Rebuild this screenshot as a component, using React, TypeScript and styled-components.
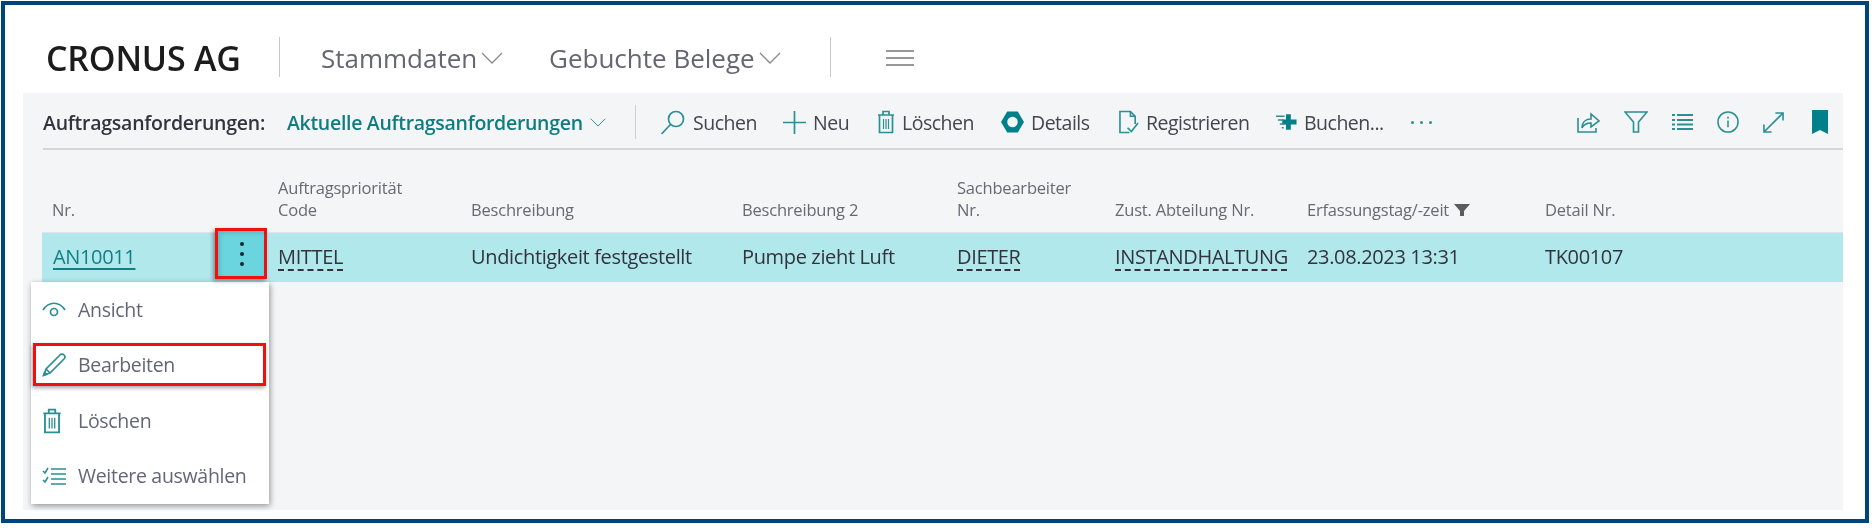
import styled, { createGlobalStyle } from "styled-components"

const GlobalStyle = createGlobalStyle`
  html, body {
    margin: 0;
    padding: 0;
    background: white;
  }
  body {
    font-family: "Open Sans", "Noto Sans", sans-serif;
  }
`

const teal = "#2b8f94"
const tealDark = "#00818a"

const Frame = styled.div`
  box-sizing: border-box;
  margin: 1px;
  width: 1868px;
  height: 522px;
  border: 4px solid #00447c;
  display: flex;
  flex-direction: column;
  overflow: hidden;
`

const AppHeader = styled.header`
  height: 88px;
  padding: 16px 0 0 41px;
  box-sizing: border-box;
  display: flex;
  align-items: center;
  flex-shrink: 0;
  filter: blur(0.4px);
`

const Brand = styled.div`
  width: 233px;
  padding-top: 2px;
  font-size: 34px;
  font-weight: 600;
  letter-spacing: -0.2px;
  color: #1c1c1c;
`

const HeaderDivider = styled.div`
  width: 1px;
  height: 40px;
  background: #c6c6c6;
`

const NavItem = styled.div<{ $width: number }>`
  width: ${(p) => p.$width}px;
  padding-top: 2px;
  display: flex;
  align-items: center;
  gap: 4px;
  font-size: 26px;
  letter-spacing: 0;
  color: #666672;
`

const NavList = styled.nav`
  display: flex;
  padding-left: 41px;
  width: 550px;
  box-sizing: border-box;
`

const MenuButton = styled.div`
  display: flex;
  margin: 2px 0 0 55px;
  color: #777;
`

const Panel = styled.main`
  position: relative;
  flex: 1;
  margin: 0 22px 9px 18px;
  background: #f4f5f7;
  filter: blur(0.4px);
`

const Toolbar = styled.div`
  height: 57px;
  margin-left: 20px;
  padding-top: 3px;
  box-sizing: border-box;
  border-bottom: 2px solid #d5d6d8;
  display: flex;
  align-items: center;
`

const PageLabel = styled.div`
  width: 244px;
  font-size: 19.5px;
  font-weight: 600;
  letter-spacing: -0.25px;
  color: #33333d;
`

const ViewPicker = styled.div`
  width: 348px;
  box-sizing: border-box;
  display: flex;
  align-items: center;
  gap: 7px;
  font-size: 19.5px;
  font-weight: 600;
  letter-spacing: -0.3px;
  color: #0f7d80;
`

const ToolDivider = styled.div`
  width: 1px;
  height: 34px;
  background: #cfd0d2;
  margin-right: 24px;
`

const ToolButton = styled.div<{ $width: number }>`
  width: ${(p) => p.$width}px;
  display: flex;
  align-items: center;
  gap: 7px;
  font-size: 19.5px;
  letter-spacing: -0.5px;
  color: #45454f;
`

const MoreDots = styled.div`
  display: flex;
  gap: 6px;
`

const MoreDot = styled.span`
  width: 3px;
  height: 3px;
  border-radius: 50%;
  background: ${teal};
`

const ToolIcons = styled.div`
  margin-left: auto;
  margin-right: 15px;
  display: flex;
  align-items: center;
  gap: 24px;
`

const BookmarkIcon = styled.svg`
  margin-left: 4px;
`

const TableGrid = `
  display: grid;
  grid-template-columns: 173px 63px 193px 271px 215px 158px 192px 238px 1fr;
  margin-left: 19px;
`

const HeadRow = styled.div`
  ${TableGrid}
  height: 83px;
  box-sizing: border-box;
  padding-bottom: 11px;
  align-items: end;
  border-bottom: 1px solid #e2e3e5;
`

const HeadCell = styled.div`
  font-size: 16.5px;
  line-height: 22px;
  letter-spacing: -0.2px;
  color: #696972;
  white-space: pre-line;
  display: flex;
  align-items: center;
  gap: 5px;

  &:first-child {
    padding-left: 10px;
  }
`

const DataRow = styled.div`
  ${TableGrid}
  height: 49px;
  padding-bottom: 2px;
  box-sizing: border-box;
  align-items: center;
  background: #b0e8ec;
`

const DataCell = styled.div`
  font-size: 20px;
  letter-spacing: -0.35px;
  color: #33333d;
  white-space: nowrap;
`

const KeyLink = styled.a`
  padding-left: 11px;
  font-size: 20px;
  letter-spacing: -0.35px;
  color: #137f84;
  text-decoration: underline;
  text-underline-offset: 4px;
`

const LookupValue = styled.span`
  text-decoration: underline dashed #33333d 2px;
  text-underline-offset: 5px;
`

const ActionCell = styled.div`
  width: 52px;
  height: 51px;
  margin-top: -6px;
  padding-left: 2px;
  box-sizing: border-box;
  background: #6ad5de;
  border: 3px solid #f01010;
  box-shadow: -2px 2px 4px rgba(0, 0, 0, 0.35), inset 2px 2px 4px rgba(0, 0, 0, 0.15);
  display: flex;
  flex-direction: column;
  align-items: center;
  justify-content: center;
  gap: 6px;
  position: relative;
  z-index: 2;
`

const ActionDot = styled.span`
  width: 4px;
  height: 4px;
  border-radius: 50%;
  background: #16282e;
`

const ContextMenu = styled.div`
  position: absolute;
  left: 8px;
  top: 189px;
  width: 238px;
  height: 222px;
  background: white;
  box-shadow: 1px 2px 6px rgba(0, 0, 0, 0.4);
  box-sizing: border-box;
  padding: 0 3px 0 2px;
`

const MenuRow = styled.div<{ $marked?: boolean }>`
  height: ${(p) => (p.$marked ? "43px" : "55px")};
  margin: ${(p) => (p.$marked ? "6px 0 7px" : "0")};
  box-sizing: border-box;
  padding-left: ${(p) => (p.$marked ? "6px" : "9px")};
  display: flex;
  align-items: center;
  border: ${(p) => (p.$marked ? "3px solid #f01010" : "none")};
  box-shadow: ${(p) => (p.$marked ? "-1px 2px 4px rgba(0, 0, 0, 0.35)" : "none")};
  font-size: 19.5px;
  letter-spacing: -0.3px;
  color: #65657a;
`

const MenuIcon = styled.span`
  width: 36px;
  display: flex;
  align-items: center;
`

function Chevron({ size = 22, color = "#8a8a92" }: { size?: number; color?: string }) {
  return (
    <svg width={size} height={size * 0.55} viewBox="0 0 22 12" fill="none" stroke={color} strokeWidth="1.3">
      <path d="M1 1l10 10L21 1" />
    </svg>
  )
}

function TrashIcon({ width = 18, height = 24 }: { width?: number; height?: number }) {
  return (
    <svg width={width} height={height} viewBox="0 0 18 24" fill="none" stroke={teal} strokeWidth="1.7">
      <path d="M1 5h16M6 5V1.5h6V5M2.5 5v17.5h13V5" />
      <path d="M6.5 9v10M9 9v10M11.5 9v10" strokeWidth="1.2" />
    </svg>
  )
}

const TableFilter = () => (
  <svg width="16" height="12" viewBox="0 0 16 12" fill="#5c5c5c">
    <path d="M0 0h16l-6 7v5H6V7z" />
  </svg>
)

function App() {
  return (
    <>
      <GlobalStyle />
      <Frame>
        <AppHeader>
          <Brand>CRONUS AG</Brand>
          <HeaderDivider />
          <NavList>
            <NavItem $width={228}>
              Stammdaten
              <Chevron />
            </NavItem>
            <NavItem $width={240}>
              Gebuchte Belege
              <Chevron />
            </NavItem>
          </NavList>
          <HeaderDivider />
          <MenuButton>
            <svg width="28" height="16" viewBox="0 0 28 16" stroke="currentColor" strokeWidth="1.4">
              <path d="M0 1h28M0 8h28M0 15h28" />
            </svg>
          </MenuButton>
        </AppHeader>

        <Panel>
          <Toolbar>
            <PageLabel>Auftragsanforderungen:</PageLabel>
            <ViewPicker>
              Aktuelle Auftragsanforderungen
              <Chevron size={16} color={teal} />
            </ViewPicker>
            <ToolDivider />
            <ToolButton $width={123}>
              <svg width="26" height="25" viewBox="0 0 26 25" fill="none" stroke={teal} strokeWidth="1.7">
                <circle cx="16" cy="9" r="7.5" />
                <path d="M10.5 14.5L1.5 24" />
              </svg>
              Suchen
            </ToolButton>
            <ToolButton $width={94}>
              <svg width="23" height="23" viewBox="0 0 23 23" stroke={teal} strokeWidth="1.7">
                <path d="M11.5 0v23M0 11.5h23" />
              </svg>
              Neu
            </ToolButton>
            <ToolButton $width={124}>
              <TrashIcon />
              Löschen
            </ToolButton>
            <ToolButton $width={118}>
              <svg width="23" height="22" viewBox="0 0 24 22" fill={tealDark}>
                <path
                  fillRule="evenodd"
                  d="M6.500 0h11L24 11l-6.500 11h-11L0 11zM12 5.500a5.500 5.500 0 1 0 0 11a5.500 5.500 0 0 0 0-11z"
                />
              </svg>
              Details
            </ToolButton>
            <ToolButton $width={157}>
              <svg width="20" height="24" viewBox="0 0 21 24" fill="none" stroke={teal} strokeWidth="1.7">
                <path d="M11 23H1V1h11l5 5v8M12 1v5h5" />
                <path d="M9 18l4 4 7-9" />
              </svg>
              Registrieren
            </ToolButton>
            <ToolButton $width={135}>
              <svg width="21" height="18" viewBox="0 0 22 18" fill="none">
                <path d="M13 1v16M6.500 9h15" stroke={tealDark} strokeWidth="5" />
                <path d="M0 3h9M2 7h6M4 11h5M6 15h2" stroke={teal} strokeWidth="1.6" />
              </svg>
              Buchen...
            </ToolButton>
            <MoreDots>
              <MoreDot />
              <MoreDot />
              <MoreDot />
            </MoreDots>
            <ToolIcons>
              <svg width="23" height="22" viewBox="0 0 23 22" fill="none" stroke={teal} strokeWidth="1.6">
                <path d="M1 7v14h18v-4" />
                <path d="M5 17c0-6 4-9 9-9V3l8 7-8 6v-4c-4 0-7 1-9 5z" />
              </svg>
              <svg width="24" height="22" viewBox="0 0 24 22" fill="none" stroke={teal} strokeWidth="1.6">
                <path d="M1 1h22l-8.500 10v10h-5V11z" />
              </svg>
              <svg width="21" height="16" viewBox="0 0 21 16" stroke={teal} strokeWidth="1.8">
                <path d="M0 1h3M5 1h16M0 6h3M5 6h16M0 10.500h3M5 10.500h16M0 15h3M5 15h16" />
              </svg>
              <svg width="22" height="22" viewBox="0 0 23 23" fill="none" stroke={teal} strokeWidth="1.6">
                <circle cx="11.500" cy="11.500" r="10.500" />
                <path d="M11.500 10v7M11.500 6v2" />
              </svg>
              <svg width="21" height="21" viewBox="0 0 22 22" fill="none" stroke={teal} strokeWidth="1.7">
                <path d="M1 21L21 1M13 1h8v8M1 13v8h8" />
              </svg>
              <BookmarkIcon width="16" height="24" viewBox="0 0 16 24" fill={tealDark}>
                <path d="M0 0h16v24l-8-4-8 4z" />
              </BookmarkIcon>
            </ToolIcons>
          </Toolbar>

          <HeadRow>
            <HeadCell>Nr.</HeadCell>
            <span />
            <HeadCell>{"Auftragspriorität\nCode"}</HeadCell>
            <HeadCell>Beschreibung</HeadCell>
            <HeadCell>Beschreibung 2</HeadCell>
            <HeadCell>{"Sachbearbeiter\nNr."}</HeadCell>
            <HeadCell>Zust. Abteilung Nr.</HeadCell>
            <HeadCell>
              Erfassungstag/-zeit
              <TableFilter />
            </HeadCell>
            <HeadCell>Detail Nr.</HeadCell>
          </HeadRow>

          <DataRow>
            <KeyLink>AN10011</KeyLink>
            <ActionCell>
              <ActionDot />
              <ActionDot />
              <ActionDot />
            </ActionCell>
            <DataCell>
              <LookupValue>MITTEL</LookupValue>
            </DataCell>
            <DataCell>Undichtigkeit festgestellt</DataCell>
            <DataCell>Pumpe zieht Luft</DataCell>
            <DataCell>
              <LookupValue>DIETER</LookupValue>
            </DataCell>
            <DataCell>
              <LookupValue>INSTANDHALTUNG</LookupValue>
            </DataCell>
            <DataCell>23.08.2023 13:31</DataCell>
            <DataCell>TK00107</DataCell>
          </DataRow>

          <ContextMenu>
            <MenuRow>
              <MenuIcon>
                <svg width="24" height="15" viewBox="0 0 24 15" fill="none" stroke={teal} strokeWidth="1.7">
                  <path d="M1 8c6-9 16-9 22 0" />
                  <circle cx="12" cy="10" r="3.500" />
                </svg>
              </MenuIcon>
              Ansicht
            </MenuRow>
            <MenuRow $marked>
              <MenuIcon>
                <svg width="24" height="24" viewBox="0 0 24 24" fill="none" stroke={teal} strokeWidth="1.7">
                  <path d="M2 22l2-6L18 2a2.800 2.800 0 0 1 4 4L8 20z" />
                  <path d="M4 16l4 4" />
                  <path d="M1.500 22.500l3-1-2-2z" fill={teal} />
                </svg>
              </MenuIcon>
              Bearbeiten
            </MenuRow>
            <MenuRow>
              <MenuIcon>
                <TrashIcon width={20} height={26} />
              </MenuIcon>
              Löschen
            </MenuRow>
            <MenuRow>
              <MenuIcon>
                <svg width="24" height="18" viewBox="0 0 24 18" fill="none" stroke={teal} strokeWidth="1.6">
                  <path d="M9 2h15M9 7h15M9 12h15M9 17h15" />
                  <path d="M1 4l2 2 3-5M1 13l2 2 3-5" />
                </svg>
              </MenuIcon>
              Weitere auswählen
            </MenuRow>
          </ContextMenu>
        </Panel>
      </Frame>
    </>
  )
}

export default App
